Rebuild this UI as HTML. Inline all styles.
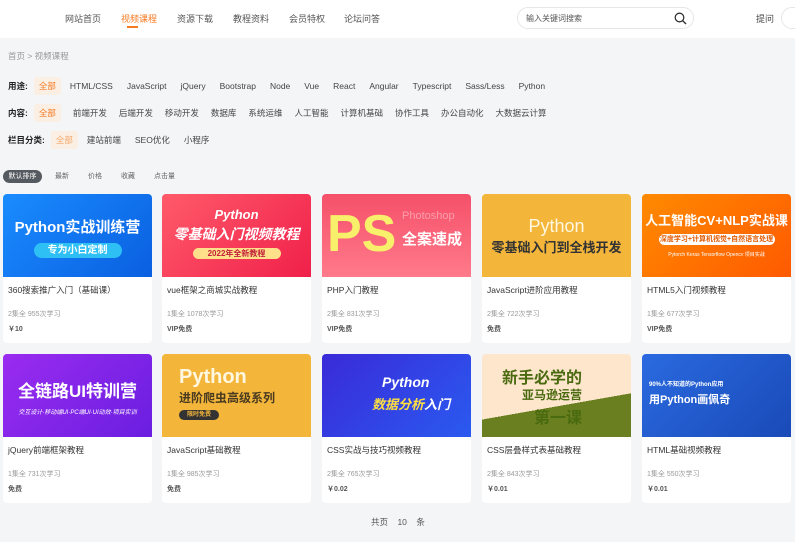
<!DOCTYPE html>
<html><head><meta charset="utf-8"><style>
*{margin:0;padding:0;box-sizing:border-box}
body{width:795px;height:559px;overflow:hidden;background:#f4f5f7;font-family:"Liberation Sans","Noto Sans CJK SC",sans-serif;font-size:9px;color:#333;position:relative}
.hdr{position:absolute;left:0;top:0;width:795px;height:38px;background:#fff}
.nav{position:absolute;top:12px;font-size:9px;color:#555}
.nav.on{color:#f57b22}
.nav.on:after{content:"";position:absolute;left:6px;top:14px;width:11px;height:2px;background:#f57b22}
.search{position:absolute;left:517px;top:7px;width:177px;height:22px;border:1px solid #e6e6e6;border-radius:11px;background:#fff;font-size:8px;color:#555;padding:5px 8px}
.abs{position:absolute;white-space:nowrap}
.crumb{left:8px;top:50px;color:#999;font-size:8.5px}
.row{position:absolute;left:8px;height:16px;display:flex;align-items:center;font-size:8.5px;color:#444}
.row b{font-weight:bold;color:#222;margin-right:6px}
.row span{margin-right:14px}
.row.c span{margin-right:12px}
.row .sel{background:#fbeee3;color:#f57b22;padding:3px 5px;border-radius:3px;margin-right:9px}
.sort{position:absolute;top:171px;font-size:7px;color:#666}
.card{position:absolute;width:149px;height:149px;background:#fff;border-radius:4px;overflow:hidden}
.img{height:83px;position:relative;overflow:hidden;color:#fff;font-weight:bold;text-align:center}
.t{position:absolute;left:5px;top:90px;font-size:8.5px;color:#333}
.m{position:absolute;left:5px;top:115px;font-size:7px;color:#999}
.p{position:absolute;left:5px;top:130px;font-size:7px;color:#555;font-weight:bold}
.foot{position:absolute;left:0;top:542px;width:795px;height:17px;background:#fff}
</style></head><body>
<div class="hdr">
<span class="nav" style="left:65px">网站首页</span>
<span class="nav on" style="left:121px">视频课程</span>
<span class="nav" style="left:177px">资源下载</span>
<span class="nav" style="left:233px">教程资料</span>
<span class="nav" style="left:289px">会员特权</span>
<span class="nav" style="left:344px">论坛问答</span>
<div class="search">输入关键词搜索
<svg style="position:absolute;right:6px;top:4px" width="13" height="13" viewBox="0 0 13 13"><circle cx="5.5" cy="5.5" r="4.3" fill="none" stroke="#333" stroke-width="1.3"/><path d="M8.6 8.6L12 12" stroke="#333" stroke-width="1.4"/></svg></div>
<span class="abs" style="left:756px;top:12px;font-size:9px;color:#444">提问</span>
<div class="abs" style="left:781px;top:7px;width:30px;height:22px;border:1px solid #e6e6e6;border-radius:11px"></div>
</div>
<div class="abs crumb">首页 &gt; 视频课程</div>
<div class="row" style="top:78px"><b>用途:</b><span class="sel">全部</span><span>HTML/CSS</span><span>JavaScript</span><span>jQuery</span><span>Bootstrap</span><span>Node</span><span>Vue</span><span>React</span><span>Angular</span><span>Typescript</span><span>Sass/Less</span><span>Python</span></div>
<div class="row c" style="top:105px"><b>内容:</b><span class="sel">全部</span><span>前端开发</span><span>后端开发</span><span>移动开发</span><span>数据库</span><span>系统运维</span><span>人工智能</span><span>计算机基础</span><span>协作工具</span><span>办公自动化</span><span>大数据云计算</span></div>
<div class="row" style="top:132px"><b>栏目分类:</b><span class="sel" style="color:#f5a86b">全部</span><span>建站前端</span><span>SEO优化</span><span>小程序</span></div>
<div class="abs" style="left:3px;top:170px;width:39px;height:13px;background:#555a60;border-radius:7px;color:#fff;font-size:7px;text-align:center;line-height:13px">默认排序</div>
<span class="sort" style="left:55px">最新</span><span class="sort" style="left:88px">价格</span><span class="sort" style="left:121px">收藏</span><span class="sort" style="left:154px">点击量</span>

<div class="card" style="left:3px;top:194px"><div class="img" style="background:linear-gradient(135deg,#1a8cff,#0a5fe0)"><div style="padding-top:22px;font-size:15px">Python实战训练营</div><div style="margin:6px auto 0;width:88px;height:15px;border-radius:8px;background:#2ec0f5;font-size:10px;line-height:15px">专为小白定制</div></div><div class="t">360搜索推广入门（基础课）</div><div class="m">2集全 955次学习</div><div class="p">￥10</div></div>
<div class="card" style="left:162px;top:194px"><div class="img" style="background:linear-gradient(135deg,#ff5a6a,#f0204a)"><div style="padding-top:13px;font-size:13px;font-style:italic">Python</div><div style="font-size:14px;margin-top:2px;font-style:italic">零基础入门视频教程</div><div style="margin:4px auto 0;width:88px;height:11px;border-radius:6px;background:#ffe08a;color:#c0203a;font-size:8px;line-height:11px">2022年全新教程</div></div><div class="t">vue框架之商城实战教程</div><div class="m">1集全 1078次学习</div><div class="p">VIP免费</div></div>
<div class="card" style="left:322px;top:194px"><div class="img" style="background:linear-gradient(180deg,#f5506a,#ff7a8a)"><div style="position:absolute;left:5px;top:14px;font-size:52px;color:#f8ef6a;line-height:52px">PS</div><div style="position:absolute;left:80px;top:16px;font-size:11px;color:rgba(255,255,255,.4);font-weight:normal">Photoshop</div><div style="position:absolute;left:80px;top:34px;font-size:15px">全案速成</div></div><div class="t">PHP入门教程</div><div class="m">2集全 831次学习</div><div class="p">VIP免费</div></div>
<div class="card" style="left:482px;top:194px"><div class="img" style="background:#f3b63a"><div style="padding-top:22px;font-size:18px;color:#fff7e0;font-weight:normal">Python</div><div style="font-size:13px;color:#333">零基础入门到全栈开发</div></div><div class="t">JavaScript进阶应用教程</div><div class="m">2集全 722次学习</div><div class="p">免费</div></div>
<div class="card" style="left:642px;top:194px"><div class="img" style="background:linear-gradient(135deg,#ff8a00,#ff5a00)"><div style="padding-top:16px;font-size:13px">人工智能CV+NLP实战课</div><div style="margin:5px auto 0;width:116px;height:11px;border-radius:6px;background:#fff;color:#e05a00;font-size:7px;line-height:11px">深度学习+计算机视觉+自然语言处理</div><div style="font-size:5px;margin-top:6px;font-weight:normal">Pytorch Keras Tensorflow Opencv 项目实战</div></div><div class="t">HTML5入门视频教程</div><div class="m">1集全 677次学习</div><div class="p">VIP免费</div></div>

<div class="card" style="left:3px;top:354px"><div class="img" style="background:linear-gradient(135deg,#9a2cf0,#6a1ee0)"><div style="padding-top:23px;font-size:17px">全链路UI特训营</div><div style="font-size:6px;margin-top:5px;font-weight:normal;font-style:italic">交互设计·移动端UI·PC端UI·UI动效·项目实训</div></div><div class="t">jQuery前端框架教程</div><div class="m">1集全 731次学习</div><div class="p">免费</div></div>
<div class="card" style="left:162px;top:354px"><div class="img" style="background:#f3b63a;text-align:left;padding-left:17px"><div style="padding-top:12px;font-size:20px;color:#fff7e0">Python</div><div style="font-size:12px;color:#4a3a20">进阶爬虫高级系列</div><div style="margin-top:4px;width:40px;height:10px;border-radius:5px;background:#333;color:#f3b63a;font-size:6px;line-height:10px;text-align:center">限时免费</div></div><div class="t">JavaScript基础教程</div><div class="m">1集全 985次学习</div><div class="p">免费</div></div>
<div class="card" style="left:322px;top:354px"><div class="img" style="background:linear-gradient(135deg,#3a2ad8,#2a5af0)"><div style="position:absolute;left:60px;top:20px;font-size:14px;font-style:italic">Python</div><div style="position:absolute;left:50px;top:40px;font-size:13px;color:#ffe040;font-style:italic">数据分析<span style="color:#fff">入门</span></div></div><div class="t">CSS实战与技巧视频教程</div><div class="m">2集全 765次学习</div><div class="p">￥0.02</div></div>
<div class="card" style="left:482px;top:354px"><div class="img" style="background:linear-gradient(170deg,#fde6cc 60%,#6a8020 60%)"><div style="position:absolute;left:20px;top:10px;font-size:16px;color:#4a6a10">新手必学的</div><div style="position:absolute;left:40px;top:32px;font-size:12px;color:#4a6a10">亚马逊运营</div><div style="position:absolute;left:52px;top:50px;font-size:16px;color:#4a6a10">第一课</div></div><div class="t">CSS层叠样式表基础教程</div><div class="m">2集全 843次学习</div><div class="p">￥0.01</div></div>
<div class="card" style="left:642px;top:354px"><div class="img" style="background:linear-gradient(135deg,#2a6ae0,#1a4ab8);text-align:left;padding-left:7px"><div style="padding-top:25px;font-size:6px">90%人不知道的Python应用</div><div style="font-size:11px;margin-top:3px">用Python画佩奇</div></div><div class="t">HTML基础视频教程</div><div class="m">1集全 550次学习</div><div class="p">￥0.01</div></div>

<div class="abs" style="left:371px;top:516px;font-size:8.5px;color:#555">共页&nbsp;&nbsp;&nbsp;&nbsp;10&nbsp;&nbsp;&nbsp;&nbsp;条</div>
<div class="foot"></div>
</body></html>
